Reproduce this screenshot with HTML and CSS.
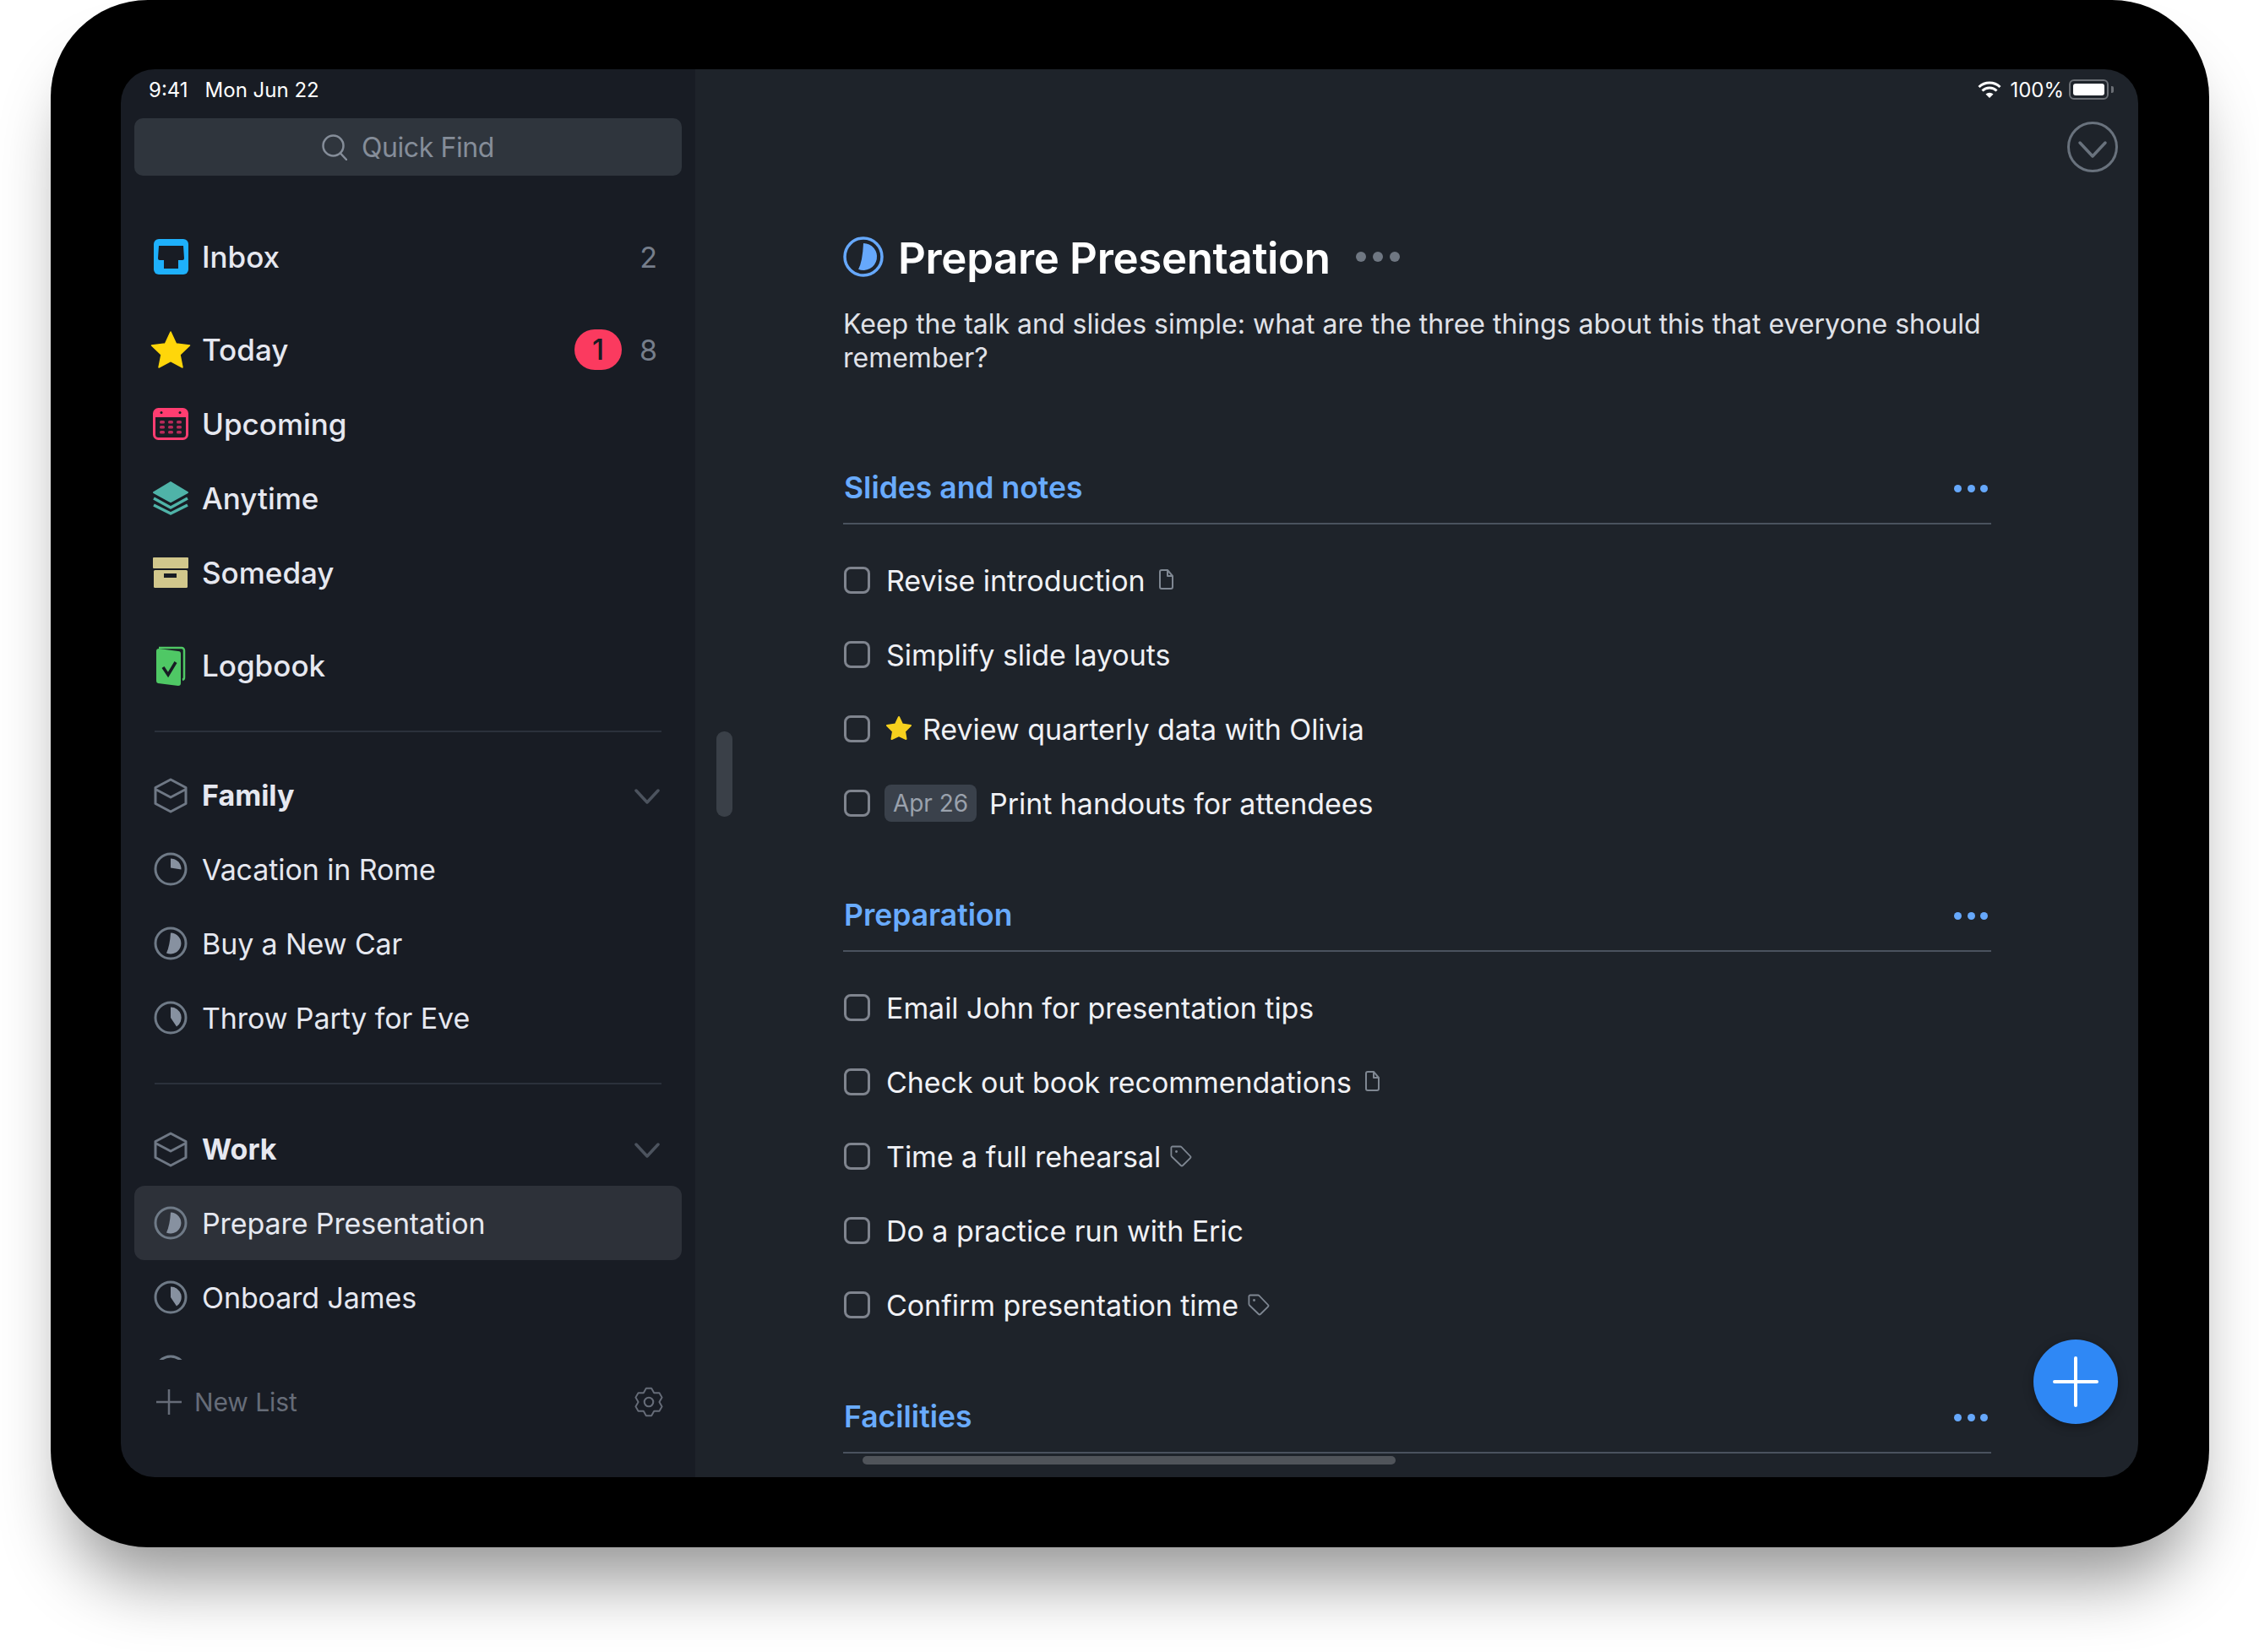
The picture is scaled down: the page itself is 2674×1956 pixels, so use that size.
FILE: index.html
```html
<!DOCTYPE html>
<html lang="en">
<head>
    <meta charset="UTF-8">
    <meta name="viewport" content="width=device-width, initial-scale=1.0">
    <title>Prepare Presentation</title>
    <link rel="stylesheet" href="styles.css">
</head>
<body>
    <svg class="sprite" width="0" height="0">
        <symbol id="area" viewBox="0 0 40 42">
            <path d="M20 2 38 11.500V30.500L20 40 2 30.500V11.500z M3 14 20 23 37 14" fill="none" stroke="#6f7885" stroke-width="3" stroke-linejoin="round"/>
        </symbol>
        <symbol id="chevron" viewBox="0 0 30 20">
            <path d="M2 3 15 17 28 3" fill="none" stroke="#4c535e" stroke-width="3.500" stroke-linecap="round" stroke-linejoin="round"/>
        </symbol>
        <symbol id="note" viewBox="0 0 18 24">
            <path d="M2 3a2 2 0 0 1 2-2h7l6 7v13a2 2 0 0 1-2 2H4a2 2 0 0 1-2-2z M11 1v7h6" fill="none" stroke="#7f8792" stroke-width="2" stroke-linejoin="round"/>
        </symbol>
        <symbol id="tag" viewBox="0 0 26 26">
            <path d="M3 1.500h9a2 2 0 0 1 1.500.6L24 13a1.500 1.500 0 0 1 0 2.100L15 24a1.500 1.500 0 0 1-2.100 0L2 13.500a2 2 0 0 1-.6-1.500V3a1.500 1.500 0 0 1 1.600-1.500z" fill="none" stroke="#7f8792" stroke-width="1.800" stroke-linejoin="round"/>
            <circle cx="7.500" cy="7.500" r="1.400" fill="#7f8792"/>
        </symbol>
    </svg>

    <div class="tablet">
        <div class="screen">
            <aside class="sidebar">
                <div class="status">
                    <span>9:41</span>
                    <span>Mon Jun 22</span>
                </div>
                <div class="search">
                    <svg class="search-icon" viewBox="0 0 30 31"><circle cx="13.500" cy="13.500" r="12" fill="none" stroke="#858d99" stroke-width="2.500"/><path d="M22 22.500 29 30" stroke="#858d99" stroke-width="2.500" stroke-linecap="round"/></svg>
                    Quick Find
                </div>
                <nav class="nav">
                    <div class="group first">
                        <div class="row">
                            <span class="icon">
                                <svg width="41" height="42" viewBox="0 0 41 42"><rect width="41" height="42" rx="6" fill="#1eb0fb"/><path d="M6 8h29l1 15a2 2 0 0 1-2 2h-5v10H12V25H7a2 2 0 0 1-2-2z" fill="#181c24"/></svg>
                            </span>
                            <span class="name">Inbox</span>
                            <span class="count">2</span>
                        </div>
                    </div>
                    <div class="group">
                        <div class="row">
                            <span class="icon">
                                <svg class="star-big" width="48" height="46" viewBox="0 0 48 46"><path d="M24 2 30.500 16 46.500 18 35 29 38 44 24 36.500 10 44 13 29 1.500 18 17.500 16z" fill="#ffd60a" stroke="#ffd60a" stroke-width="1.500" stroke-linejoin="round"/></svg>
                            </span>
                            <span class="name">Today</span>
                            <span class="badge">1</span>
                            <span class="count">8</span>
                        </div>
                        <div class="row">
                            <span class="icon">
                                <svg width="42" height="38" viewBox="0 0 42 38">
                                    <rect x="1.500" y="1.500" width="39" height="35" rx="5" fill="#181c24" stroke="#ff3d71" stroke-width="3"/>
                                    <path d="M1 6a5 5 0 0 1 5-5h30a5 5 0 0 1 5 5v5H1z" fill="#ff3d71"/>
                                    <circle cx="10" cy="5.500" r="1.500" fill="#181c24"/><circle cx="32" cy="5.500" r="1.500" fill="#181c24"/>
                                    <g fill="#b82a5a">
                                        <rect x="8" y="15" width="6" height="3.500" rx="1.500"/><rect x="18" y="15" width="6" height="3.500" rx="1.500"/><rect x="28" y="15" width="6" height="3.500" rx="1.500"/>
                                        <rect x="8" y="21" width="6" height="3.500" rx="1.500"/><rect x="18" y="21" width="6" height="3.500" rx="1.500"/><rect x="28" y="21" width="6" height="3.500" rx="1.500"/>
                                        <rect x="8" y="27" width="6" height="3.500" rx="1.500"/><rect x="18" y="27" width="6" height="3.500" rx="1.500"/><rect x="28" y="27" width="6" height="3.500" rx="1.500"/>
                                    </g>
                                </svg>
                            </span>
                            <span class="name">Upcoming</span>
                        </div>
                        <div class="row">
                            <span class="icon">
                                <svg width="44" height="40" viewBox="0 0 44 40"><path d="M22 1 42 13 22 24 2 13z" fill="#4fb3a8" stroke="#4fb3a8" stroke-width="2" stroke-linejoin="round"/><path d="M2 20 22 31 42 20 M2 28 22 38 42 28" fill="none" stroke="#4fb3a8" stroke-width="3.500" stroke-linejoin="round"/></svg>
                            </span>
                            <span class="name">Anytime</span>
                        </div>
                        <div class="row">
                            <span class="icon">
                                <svg width="42" height="36" viewBox="0 0 42 36"><rect width="42" height="13" rx="1" fill="#d1c78c"/><rect x="1" y="15" width="40" height="21" rx="1.500" fill="#d1c78c"/><rect x="13" y="19" width="15" height="5" fill="#181c24"/></svg>
                            </span>
                            <span class="name">Someday</span>
                        </div>
                    </div>
                    <div class="group">
                        <div class="row">
                            <span class="icon">
                                <svg width="36" height="47" viewBox="0 0 36 47"><path d="M4 2h27a3 3 0 0 1 3 3v32a3 3 0 0 1-2 3" fill="none" stroke="#4fc865" stroke-width="2.500"/><path d="M1 6a3 3 0 0 1 3-3l23 3a3 3 0 0 1 3 3v35a3 3 0 0 1-3 3L3 44a3 3 0 0 1-2-3z" fill="#4fc865"/><path d="M9 25 15 34 24 19" fill="none" stroke="#181c24" stroke-width="3.500"/></svg>
                            </span>
                            <span class="name">Logbook</span>
                        </div>
                    </div>
                    <div class="divider divider-top"></div>
                    <div class="row area">
                        <span class="icon"><svg width="40" height="42"><use href="#area"/></svg></span>
                        <span class="name">Family</span>
                        <svg class="fold"><use href="#chevron"/></svg>
                    </div>
                    <div class="row">
                        <span class="icon">
                            <svg class="pie" viewBox="0 0 40 40"><circle cx="20" cy="20" r="18" fill="none" stroke="currentColor" stroke-width="3"/><path d="M20 7.500A12.500 12.500 0 0 1 32.500 20.500L20 18.500z" fill="#8791a0"/></svg>
                        </span>
                        <span class="name">Vacation in Rome</span>
                    </div>
                    <div class="row">
                        <span class="icon">
                            <svg class="pie" viewBox="0 0 40 40"><circle cx="20" cy="20" r="18" fill="none" stroke="currentColor" stroke-width="3"/><path d="M20 7.500A12.500 12.500 0 1 1 15 31.500Q19 23 20 7.500z" fill="#8791a0"/></svg>
                        </span>
                        <span class="name">Buy a New Car</span>
                    </div>
                    <div class="row">
                        <span class="icon">
                            <svg class="pie" viewBox="0 0 40 40"><circle cx="20" cy="20" r="18" fill="none" stroke="currentColor" stroke-width="3"/><path d="M20 7.500A12.500 12.500 0 0 1 27 30.500L20 20z" fill="#8791a0"/></svg>
                        </span>
                        <span class="name">Throw Party for Eve</span>
                    </div>
                    <div class="divider"></div>
                    <div class="row area">
                        <span class="icon"><svg width="40" height="42"><use href="#area"/></svg></span>
                        <span class="name">Work</span>
                        <svg class="fold"><use href="#chevron"/></svg>
                    </div>
                    <div class="row selected">
                        <span class="icon">
                            <svg class="pie" viewBox="0 0 40 40"><circle cx="20" cy="20" r="18" fill="none" stroke="currentColor" stroke-width="3"/><path d="M20 7.500A12.500 12.500 0 1 1 15 31.500Q19 23 20 7.500z" fill="#8791a0"/></svg>
                        </span>
                        <span class="name">Prepare Presentation</span>
                    </div>
                    <div class="row">
                        <span class="icon">
                            <svg class="pie" viewBox="0 0 40 40"><circle cx="20" cy="20" r="18" fill="none" stroke="currentColor" stroke-width="3"/><path d="M20 7.500A12.500 12.500 0 0 1 27 30.500L20 20z" fill="#8791a0"/></svg>
                        </span>
                        <span class="name">Onboard James</span>
                    </div>
                    <div class="row">
                        <span class="icon">
                            <svg class="pie" viewBox="0 0 40 40"><circle cx="20" cy="20" r="18" fill="none" stroke="currentColor" stroke-width="3"/></svg>
                        </span>
                    </div>
                </nav>
                <div class="sidebar-foot">
                    <svg class="foot-plus" viewBox="0 0 30 30"><path d="M15 0V30M0 15H30" stroke="#666c78" stroke-width="2.500"/></svg>
                    <span class="new-list">New List</span>
                    <svg class="gear" viewBox="0 0 24 24">
                        <polygon points="9.900,1.200 14.100,1.200 16.150,4.810 20.300,4.780 22.400,8.410 20.300,12 22.400,15.590 20.300,19.220 16.150,19.190 14.100,22.800 9.900,22.800 7.850,19.190 3.700,19.220 1.600,15.590 3.700,12 1.600,8.410 3.700,4.780 7.850,4.810" fill="none" stroke="#666c78" stroke-width="1.300" stroke-linejoin="round"/>
                        <circle cx="12" cy="12" r="3.500" fill="none" stroke="#666c78" stroke-width="1.400"/>
                    </svg>
                </div>
            </aside>

            <main class="main">
                <div class="status status-right">
                    <svg class="wifi" viewBox="0 0 28 20"><path d="M14 20 9.500 15.500a6.500 6.500 0 0 1 9 0z" fill="#fff"/><path d="M5.500 11.500a12 12 0 0 1 17 0M1.500 7a18 18 0 0 1 25 0" fill="none" stroke="#fff" stroke-width="3"/></svg>
                    <span>100%</span>
                    <span class="battery"><span class="battery-fill"></span></span>
                    <span class="battery-nub"></span>
                </div>
                <div class="toolbar">
                    <svg class="collapse" viewBox="0 0 60 60"><circle cx="30" cy="30" r="28.500" fill="none" stroke="#69727d" stroke-width="3"/><path d="M15 25 30 41 45 25" fill="none" stroke="#69727d" stroke-width="3.500" stroke-linecap="round" stroke-linejoin="round"/></svg>
                </div>
                <div class="content">
                    <div class="title-row">
                        <svg class="title-pie" viewBox="0 0 48 48"><circle cx="24" cy="24" r="22" fill="none" stroke="#66a8fb" stroke-width="3.500"/><path d="M24 8A16 16 0 1 1 18 38.800Q23 30 24 8z" fill="#66a8fb"/></svg>
                        <h1>Prepare Presentation</h1>
                        <span class="title-dots"><i></i><i></i><i></i></span>
                    </div>
                    <p class="notes">Keep the talk and slides simple: what are the three things about this that everyone should remember?</p>

                    <section class="section">
                        <div class="section-head">
                            <h2>Slides and notes</h2>
                            <span class="section-dots"><i></i><i></i><i></i></span>
                        </div>
                        <ul class="todos">
                            <li><span class="box"></span>Revise introduction<svg class="note"><use href="#note"/></svg></li>
                            <li><span class="box"></span>Simplify slide layouts</li>
                            <li><span class="box"></span><svg class="star" viewBox="0 0 32 30"><path d="M16 2 20 10.500 30 12 23 19 24.500 28 16 24 7.500 28 9 19 2 12 12 10.500z" fill="#f7d11e" stroke="#f7d11e" stroke-width="2" stroke-linejoin="round"/></svg>Review quarterly data with Olivia</li>
                            <li><span class="box"></span><span class="date">Apr 26</span>Print handouts for attendees</li>
                        </ul>
                    </section>

                    <section class="section">
                        <div class="section-head">
                            <h2>Preparation</h2>
                            <span class="section-dots"><i></i><i></i><i></i></span>
                        </div>
                        <ul class="todos">
                            <li><span class="box"></span>Email John for presentation tips</li>
                            <li><span class="box"></span>Check out book recommendations<svg class="note"><use href="#note"/></svg></li>
                            <li><span class="box"></span>Time a full rehearsal<svg class="tag"><use href="#tag"/></svg></li>
                            <li><span class="box"></span>Do a practice run with Eric</li>
                            <li><span class="box"></span>Confirm presentation time<svg class="tag"><use href="#tag"/></svg></li>
                        </ul>
                    </section>

                    <section class="section">
                        <div class="section-head">
                            <h2>Facilities</h2>
                            <span class="section-dots"><i></i><i></i><i></i></span>
                        </div>
                    </section>
                </div>

                <div class="scroll-v"></div>
                <div class="scroll-h"></div>
                <button class="fab"><svg viewBox="0 0 54 60"><path d="M27 2V58M2 30H52" stroke="#fff" stroke-width="4" stroke-linecap="round"/></svg></button>
            </main>
        </div>
    </div>
</body>
</html>
```

FILE: styles.css
```css
* {
    box-sizing: border-box;
}

html, body {
    margin: 0;
    height: 1956px;
    background: #fff;
    overflow: hidden;
}

body {
    font-family: Inter, "Liberation Sans", sans-serif;
    font-size: 34px;
    color: #e6e8f0;
}

.sprite {
    position: absolute;
}

.tablet {
    width: 2555px;
    height: 1832px;
    margin-left: 60px;
    padding: 82px 84px 83px 83px;
    background: #000;
    border-radius: 115px;
    box-shadow: 0 60px 80px -22px rgba(0, 0, 0, 0.42);
}

.screen {
    display: flex;
    height: 100%;
    border-radius: 40px;
    overflow: hidden;
}

/* sidebar */

.sidebar {
    display: flex;
    flex-direction: column;
    flex: 0 0 680px;
    padding: 0 16px;
    background: #181c24;
}

.status {
    display: flex;
    align-items: center;
    gap: 20px;
    height: 58px;
    padding: 0 17px 10px;
    font-size: 24px;
    color: #fff;
}

.search {
    display: flex;
    align-items: center;
    justify-content: center;
    gap: 17px;
    height: 68px;
    background: #2f353d;
    border-radius: 10px;
    color: #858d99;
    font-size: 32px;
    letter-spacing: -0.4px;
}

.search-icon {
    width: 30px;
    height: 31px;
}

.nav {
    flex: 1;
    min-height: 0;
    overflow: hidden;
}

.group {
    margin-top: 22px;
}

.group.first {
    margin-top: 52px;
}

.row {
    display: flex;
    align-items: center;
    height: 88px;
    padding: 0 29px 0 20px;
    border-radius: 12px;
}

.row.selected {
    background: #2d3139;
}

.icon {
    display: flex;
    align-items: center;
    justify-content: center;
    flex: 0 0 46px;
    margin-right: 14px;
    color: #6f7a87;
}

.star-big {
    flex: none;
    margin: 0 -1px;
}

.name {
    flex: 1;
    letter-spacing: -0.1px;
}

.group .name {
    font-size: 35px;
    font-weight: 500;
    letter-spacing: 0;
}

.area .name {
    font-weight: 700;
    letter-spacing: 0;
}

.area .icon svg {
    margin-top: 2px;
}

.count {
    color: #767e8b;
}

.badge {
    width: 56px;
    height: 48px;
    margin-right: 21px;
    border-radius: 24px;
    background: #fb3a5f;
    color: #181c24;
    font-weight: 500;
    line-height: 48px;
    text-align: center;
}

.fold {
    width: 30px;
    height: 20px;
    margin: 3px -3px 0 0;
}

.pie {
    width: 40px;
    height: 40px;
}

.divider {
    height: 2px;
    margin: 33px 24px 32px;
    background: #2b313b;
}

.divider-top {
    margin-bottom: 30px;
}

.sidebar-foot {
    display: flex;
    align-items: center;
    height: 139px;
    padding: 0 21px 40px 26px;
    color: #666c78;
}

.foot-plus {
    width: 30px;
    height: 30px;
    margin-right: 15px;
}

.new-list {
    flex: 1;
    font-size: 30px;
    letter-spacing: -0.1px;
}

.gear {
    width: 36px;
    height: 36px;
}

/* main */

.main {
    position: relative;
    flex: 1;
    min-width: 0;
    background: #1e232a;
    overflow: hidden;
}

.status-right {
    justify-content: flex-end;
    gap: 10px;
    padding-right: 29px;
}

.wifi {
    width: 28px;
    height: 20px;
}

.battery {
    display: flex;
    width: 47px;
    height: 24px;
    padding: 3px;
    margin-left: -4px;
    border: 2px solid #6b6f75;
    border-radius: 6px;
}

.battery-fill {
    flex: 1;
    background: #fff;
    border-radius: 3px;
}

.battery-nub {
    width: 3px;
    height: 8px;
    margin-left: -7px;
    background: #6b6f75;
    border-radius: 0 2px 2px 0;
}

.toolbar {
    display: flex;
    justify-content: flex-end;
    margin-top: 4px;
    padding-right: 24px;
}

.collapse {
    width: 60px;
    height: 60px;
}

.content {
    margin-top: 70px;
    padding: 0 174px 0 175px;
}

.title-row {
    display: flex;
    align-items: center;
    height: 60px;
}

.title-pie {
    width: 48px;
    height: 48px;
    margin-right: 17px;
}

h1 {
    margin: 0;
    padding-top: 2px;
    font-size: 51px;
    font-weight: 600;
    letter-spacing: -0.35px;
    color: #fff;
}

.title-dots {
    display: flex;
    gap: 8px;
    margin-left: 30px;
}

.title-dots i {
    width: 12px;
    height: 12px;
    border-radius: 50%;
    background: #6f7782;
}

.notes {
    margin: 30px 0 0;
    line-height: 40px;
    font-size: 32px;
    color: #e0e2e8;
}

.section {
    margin-top: 49px;
}

.notes + .section {
    margin-top: 94px;
}

.section-head {
    display: flex;
    align-items: center;
    justify-content: space-between;
    height: 83px;
    padding: 0 4px 2px 1px;
    border-bottom: 2px solid #4a525e;
}

h2 {
    margin: 0;
    font-size: 35.500px;
    font-weight: 600;
    color: #69abfd;
}

.section-dots {
    display: flex;
    gap: 6.500px;
    margin-top: 2px;
}

.section-dots i {
    width: 9px;
    height: 9px;
    border-radius: 50%;
    background: #66a8fb;
}

.todos {
    margin: 0;
    padding: 22px 0 0;
    list-style: none;
}

.todos li {
    display: flex;
    align-items: center;
    height: 88px;
    color: #f0f1f5;
    padding-left: 1px;
    letter-spacing: -0.05px;
}

.box {
    width: 31px;
    height: 32px;
    margin-right: 19px;
    border: 3px solid #7f848e;
    border-radius: 8px;
}

.date {
    height: 44px;
    margin: 0 15px 0 -2px;
    padding: 0 10px;
    border-radius: 8px;
    background: #3a414b;
    color: #9aa2ad;
    font-size: 28px;
    line-height: 44px;
}

.star {
    width: 32px;
    height: 30px;
    margin: -2px 12px 0 -1px;
}

.note {
    width: 18px;
    height: 24px;
    margin: -3px 0 0 15px;
}

.tag {
    width: 26px;
    height: 26px;
    margin-left: 11px;
}

.scroll-v {
    position: absolute;
    left: 25px;
    top: 784px;
    width: 19px;
    height: 101px;
    border-radius: 9px;
    background: #3a4048;
}

.scroll-h {
    position: absolute;
    left: 198px;
    bottom: 15px;
    width: 631px;
    height: 10px;
    border-radius: 5px;
    background: #50545a;
}

.fab {
    position: absolute;
    left: 1584px;
    top: 1504px;
    width: 100px;
    height: 100px;
    padding: 20px 23px;
    border: none;
    border-radius: 50%;
    background: #2f88f5;
    box-shadow: 0 3px 12px rgba(0, 0, 0, 0.35);
}

.fab svg {
    display: block;
    width: 54px;
    height: 60px;
}
```
